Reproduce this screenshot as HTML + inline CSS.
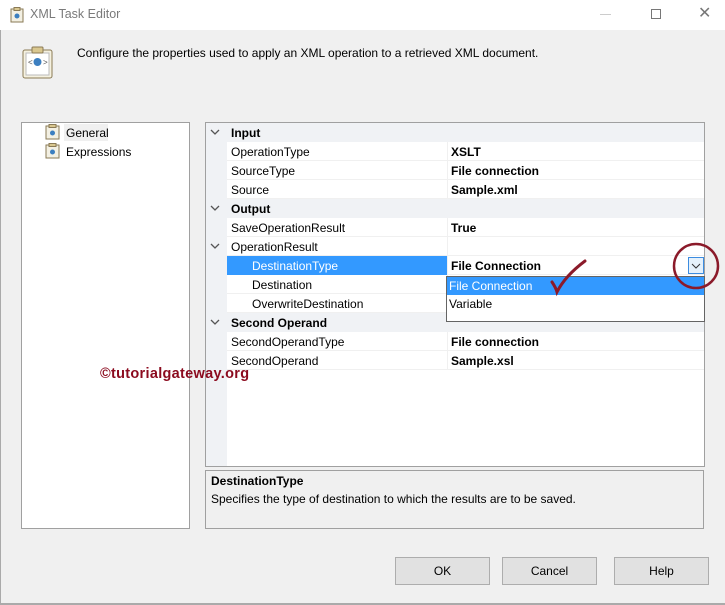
<!DOCTYPE html>
<html><head><style>
*{margin:0;padding:0;box-sizing:border-box}
body{width:725px;height:605px;background:#f0f0f0;font-family:"Liberation Sans",sans-serif;font-size:12px;color:#000;position:relative;overflow:hidden}
.a{position:absolute}
.t{position:absolute;white-space:nowrap;line-height:19px;margin-top:1px}
.row{position:absolute;left:227px;width:477px;height:19px;border-bottom:1px solid #f0f0f0;background:#fff}
.cat{position:absolute;left:206px;width:498px;height:19px;background:#f0f2f5}
.vsep{position:absolute;left:447px;width:1px;background:#f0f0f0}
.btn{position:absolute;top:557px;width:95px;height:28px;background:#e1e1e1;border:1px solid #adadad;text-align:center;line-height:26px}
.chev{position:absolute;left:210px}
</style></head><body>
<div class="a" style="left:0;top:0;width:725px;height:30px;background:#fff"></div>
<svg class="a" style="left:10px;top:7px" width="14" height="16"><rect x="1" y="2" width="12" height="13" fill="#f3f0e3" stroke="#8a7a55"/><rect x="4" y="0.5" width="6" height="3" fill="#d9c78f" stroke="#8a7a55"/><circle cx="7" cy="9" r="2.5" fill="#3c7fc0"/></svg>
<div class="t" style="left:30px;top:4px;color:#7a7a7a;font-size:12.5px">XML Task Editor</div>
<div class="a" style="left:600px;top:14px;width:11px;height:1px;background:#ccc"></div>
<div class="a" style="left:651px;top:9px;width:10px;height:10px;border:1px solid #777"></div>
<div class="t" style="left:698px;top:3px;color:#777;font-size:16px">✕</div>
<div class="a" style="left:0;top:30px;width:1px;height:575px;background:#aaa"></div>
<div class="a" style="left:0;top:603px;width:725px;height:2px;background:#aaa"></div>
<svg class="a" style="left:22px;top:46px" width="32" height="33"><rect x="1" y="4" width="29" height="28" rx="2" fill="#f5f1e0" stroke="#8a7a55"/><rect x="4" y="7" width="23" height="22" fill="#fff" stroke="#bbb"/><rect x="10" y="1" width="11" height="6" rx="1" fill="#d9c78f" stroke="#8a7a55"/><circle cx="15.5" cy="16" r="4" fill="#3c7fc0"/><text x="6" y="19" font-size="8" fill="#555">&lt;</text><text x="21" y="19" font-size="8" fill="#555">&gt;</text></svg>
<div class="t" style="left:77px;top:43px">Configure the properties used to apply an XML operation to a retrieved XML document.</div>

<div class="a" style="left:21px;top:122px;width:169px;height:407px;background:#fff;border:1px solid #a0a0a0"></div>
<svg class="a" style="left:45px;top:124px" width="16" height="16"><rect x="1" y="2" width="13" height="13" fill="#f3f0e3" stroke="#8a7a55"/><rect x="4" y="0.5" width="7" height="3" fill="#d9c78f" stroke="#8a7a55"/><circle cx="7.5" cy="9" r="2.5" fill="#3c7fc0"/></svg>
<div class="a" style="left:64px;top:124px;width:44px;height:17px;background:#f0f0f0"></div>
<div class="t" style="left:66px;top:123px">General</div>
<svg class="a" style="left:45px;top:143px" width="16" height="16"><rect x="1" y="2" width="13" height="13" fill="#f3f0e3" stroke="#8a7a55"/><rect x="4" y="0.5" width="7" height="3" fill="#d9c78f" stroke="#8a7a55"/><circle cx="7.5" cy="9" r="2.5" fill="#3c7fc0"/></svg>
<div class="t" style="left:66px;top:142px">Expressions</div>

<div class="a" style="left:205px;top:122px;width:500px;height:345px;background:#fff;border:1px solid #a0a0a0"></div>
<div class="a" style="left:206px;top:123px;width:21px;height:343px;background:#f0f2f5"></div>
<div class="cat" style="top:123px"></div><div class="t" style="left:231px;top:123px;font-weight:bold">Input</div>
<div class="row" style="top:142px"></div><div class="t" style="left:231px;top:142px">OperationType</div><div class="t" style="left:451px;top:142px;font-weight:bold">XSLT</div>
<div class="row" style="top:161px"></div><div class="t" style="left:231px;top:161px">SourceType</div><div class="t" style="left:451px;top:161px;font-weight:bold">File connection</div>
<div class="row" style="top:180px"></div><div class="t" style="left:231px;top:180px">Source</div><div class="t" style="left:451px;top:180px;font-weight:bold">Sample.xml</div>
<div class="cat" style="top:199px"></div><div class="t" style="left:231px;top:199px;font-weight:bold">Output</div>
<div class="row" style="top:218px"></div><div class="t" style="left:231px;top:218px">SaveOperationResult</div><div class="t" style="left:451px;top:218px;font-weight:bold">True</div>
<div class="row" style="top:237px"></div><div class="t" style="left:231px;top:237px">OperationResult</div>
<div class="row" style="top:256px"></div><div class="a" style="left:227px;top:256px;width:220px;height:19px;background:#3399ff"></div><div class="t" style="left:252px;top:256px;color:#fff">DestinationType</div><div class="t" style="left:451px;top:256px;font-weight:bold">File Connection</div>
<div class="row" style="top:275px"></div><div class="t" style="left:252px;top:275px">Destination</div>
<div class="row" style="top:294px"></div><div class="t" style="left:252px;top:294px">OverwriteDestination</div>
<div class="cat" style="top:313px"></div><div class="t" style="left:231px;top:313px;font-weight:bold">Second Operand</div>
<div class="row" style="top:332px"></div><div class="t" style="left:231px;top:332px">SecondOperandType</div><div class="t" style="left:451px;top:332px;font-weight:bold">File connection</div>
<div class="row" style="top:351px"></div><div class="t" style="left:231px;top:351px">SecondOperand</div><div class="t" style="left:451px;top:351px;font-weight:bold">Sample.xsl</div>
<div class="vsep" style="top:142px;height:57px"></div><div class="vsep" style="top:218px;height:95px"></div><div class="vsep" style="top:332px;height:38px"></div>
<svg class="chev" style="top:129px" width="10" height="7"><path d="M1 1 L5 5 L9 1" stroke="#555" stroke-width="1.3" fill="none"/></svg>
<svg class="chev" style="top:205px" width="10" height="7"><path d="M1 1 L5 5 L9 1" stroke="#555" stroke-width="1.3" fill="none"/></svg>
<svg class="chev" style="top:243px" width="10" height="7"><path d="M1 1 L5 5 L9 1" stroke="#555" stroke-width="1.3" fill="none"/></svg>
<svg class="chev" style="top:319px" width="10" height="7"><path d="M1 1 L5 5 L9 1" stroke="#555" stroke-width="1.3" fill="none"/></svg>

<div class="a" style="left:688px;top:257px;width:16px;height:17px;border:1px solid #3c8ce0;background:#e5f1fb"></div>
<svg class="a" style="left:691px;top:263px" width="10" height="6"><path d="M1 1 L5 5 L9 1" stroke="#333" fill="none"/></svg>
<div class="a" style="left:446px;top:276px;width:259px;height:46px;background:#fff;border:1px solid #646464"></div>
<div class="a" style="left:447px;top:277px;width:257px;height:18px;background:#3399ff"></div>
<div class="t" style="left:449px;top:276px;color:#fff">File Connection</div>
<div class="t" style="left:449px;top:294px">Variable</div>

<svg class="a" style="left:540px;top:238px" width="185" height="62"><circle cx="156" cy="28" r="22" fill="none" stroke="#8b1a2a" stroke-width="2.5"/><path d="M12 44 Q16 50 17 54 Q25 38 45 23" stroke="#8b1a2a" stroke-width="3" fill="none" stroke-linecap="round"/></svg>

<div class="t" style="left:100px;top:364px;font-weight:bold;font-size:14.5px;letter-spacing:0.3px;color:#8b0a1e">©tutorialgateway.org</div>

<div class="a" style="left:205px;top:470px;width:499px;height:59px;border:1px solid #a0a0a0"></div>
<div class="t" style="left:211px;top:471px;font-weight:bold">DestinationType</div>
<div class="t" style="left:211px;top:489px">Specifies the type of destination to which the results are to be saved.</div>

<div class="btn" style="left:395px">OK</div>
<div class="btn" style="left:502px">Cancel</div>
<div class="btn" style="left:614px">Help</div>
</body></html>
